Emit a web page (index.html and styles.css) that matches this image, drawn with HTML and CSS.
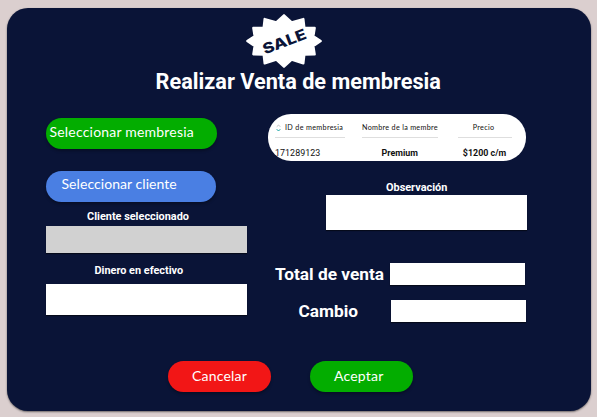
FILE: index.html
```html
<!DOCTYPE html>
<html lang="es">
<head>
<meta charset="utf-8">
<title>Realizar Venta de membresia</title>
<link rel="stylesheet" href="styles.css">
</head>
<body>
<main class="card">
  <header class="header">
    <svg class="badge" viewBox="0 0 228 162" role="img" aria-label="Sale">
      <path class="burst" d="M114 4 L137 25 L172 15 L175 41 L206 42 L202 67 L224 81 L202 96 L206 121 L175 122 L172 148 L137 137 L114 158 L91 137 L56 148 L53 122 L22 121 L26 96 L4 81 L26 67 L22 42 L53 41 L56 15 L91 25 Z"/>
      <text class="sale" x="-68" y="16" textLength="136" lengthAdjust="spacingAndGlyphs" transform="translate(115 82) rotate(-21)">SALE</text>
    </svg>
    <h1 class="title">Realizar Venta de membresia</h1>
  </header>
  <div class="columns">
    <section class="left">
      <button class="btn green member"><span class="w-member">Seleccionar membresia</span></button>
      <button class="btn blue client"><span class="w-client">Seleccionar cliente</span></button>
      <label class="label l-client">Cliente seleccionado</label>
      <div class="field gray"></div>
      <label class="label l-cash">Dinero en efectivo</label>
      <div class="field cash"></div>
    </section>
    <section class="right">
      <div class="table">
        <div class="col id">
          <div class="th"><svg class="sort" viewBox="0 0 5 8"><path d="M.7 2.8 2.5 1l1.8 1.8"/><path class="down" d="M.7 5.2 2.5 7l1.8-1.8"/></svg><span>ID de membresia</span></div>
          <div class="td">171289123</div>
        </div>
        <div class="col name">
          <div class="th"><span>Nombre de la membresia</span></div>
          <div class="td strong">Premium</div>
        </div>
        <div class="col price">
          <div class="th"><span>Precio</span></div>
          <div class="td strong">$1200 c/m</div>
        </div>
      </div>
      <label class="label l-obs">Observación</label>
      <div class="field obs"></div>
      <div class="row total"><span class="big">Total de venta</span><div class="field amount"></div></div>
      <div class="row change"><span class="big">Cambio</span><div class="field amount"></div></div>
    </section>
  </div>
  <footer class="actions">
    <button class="btn red action"><span>Cancelar</span></button>
    <button class="btn green action"><span>Aceptar</span></button>
  </footer>
</main>
</body>
</html>
```
FILE: styles.css
```css
* { box-sizing: border-box; }
body {
  margin: 0;
  width: 597px;
  height: 417px;
  padding: 7.5px 6px 6px 6.5px;
  background: #dbcfcf;
  overflow: hidden;
  font-family: Roboto, "Liberation Sans", sans-serif;
}
.card {
  height: 403.5px;
  background: #0a1437;
  border-radius: 21px;
  box-shadow: 0 1px 2px rgba(0, 0, 0, .5);
  overflow: hidden;
}
.header {
  display: flex;
  flex-direction: column;
  align-items: center;
  height: 106.5px;
  padding: 6px 0 0;
}
.badge { width: 76px; height: 54px; margin-right: 29px; }
.burst { fill: #fff; stroke: #fff; stroke-width: 7; stroke-linejoin: round; }
.sale { fill: #0a1437; font: 800 44px Inter, sans-serif; }
.title {
  margin: 0;
  line-height: 27px;
  font-size: 21.7px;
  font-weight: 700;
  color: #fff;
  white-space: nowrap;
  padding-right: 1px;
}
.columns { display: flex; padding-left: 39.5px; height: 247px; }
.left { width: 222px; padding-top: 4px; }
.right { width: 259px; }
.btn {
  display: flex;
  align-items: center;
  margin: 0;
  padding: 0;
  border: 0;
  border-radius: 16px;
  height: 31px;
  font-family: Lato, sans-serif;
  font-size: 14px;
  color: #fff;
  box-shadow: 0 2px 3px rgba(0, 0, 0, .3);
  white-space: nowrap;
}
.green { background: #03ad00; }
.blue { background: #4a7fe3; }
.red { background: #f21616; }
.member { width: 171px; padding: 0 0 5px 3.5px; }
.client { width: 170px; margin-top: 21.5px; padding: 0 0 5px 15.5px; }
.w-member { letter-spacing: .2px; }
.w-client { letter-spacing: .06px; }
.label {
  display: block;
  font-size: 10.9px;
  line-height: 14px;
  font-weight: 700;
  color: #fff;
}
.l-client { margin: 8.5px 0 2px 41px; }
.l-cash { margin: 10.5px 0 6.5px 48.5px; }
.field { background: #fff; box-shadow: 0 1px 1px rgba(0, 0, 0, .5); }
.gray { width: 201px; height: 27px; background: #d1d1d1; }
.cash { width: 201px; height: 31px; }
.table {
  display: flex;
  width: 258px;
  height: 46.5px;
  padding: 0 0 0 7px;
  border-radius: 23px;
  background: #fff;
  color: #111;
}
.th {
  display: flex;
  align-items: center;
  height: 24px;
  padding-top: 5px;
  border-bottom: 1px solid #dedede;
  overflow: hidden;
  white-space: nowrap;
  font: 400 7.2px/10px Lato, sans-serif;
  letter-spacing: .33px;
}
.td { margin-top: 8.6px; font-size: 8.9px; line-height: 12px; }
.id .td { letter-spacing: .05px; }
.strong { font-weight: 700; text-align: center; }
.id { width: 70px; }
.name { width: 75.5px; margin-left: 17px; }
.price { width: 54px; margin-left: 20px; }
.name .th { letter-spacing: .3px; }
.price .th { justify-content: center; padding-right: 2px; }
.price .td { white-space: nowrap; }
.sort { width: 5px; height: 8px; margin: 0 4px 0 1px; fill: none; stroke: #aaa; stroke-width: .7; flex: none; }
.sort .down { stroke: #14a3a3; stroke-width: 1; }
.l-obs { margin: 20.5px 0 0 118px; }
.obs { width: 201px; height: 35px; margin-left: 57.5px; }
.row { display: flex; align-items: center; color: #fff; }
.amount { width: 135px; height: 21.5px; }
.big { font-size: 17.3px; line-height: 21px; font-weight: 700; white-space: nowrap; position: relative; top: 1px; }
.total { margin-top: 33px; }
.total .big { width: 115px; padding-left: 7px; }
.total .amount { margin-left: 7px; }
.change { margin-top: 15.5px; }
.change .big { width: 123px; padding-left: 30.5px; }
.actions { display: flex; gap: 39px; padding-left: 161.5px; }
.action { width: 103px; padding: 0 0 2px 24px; letter-spacing: .2px; }
```
